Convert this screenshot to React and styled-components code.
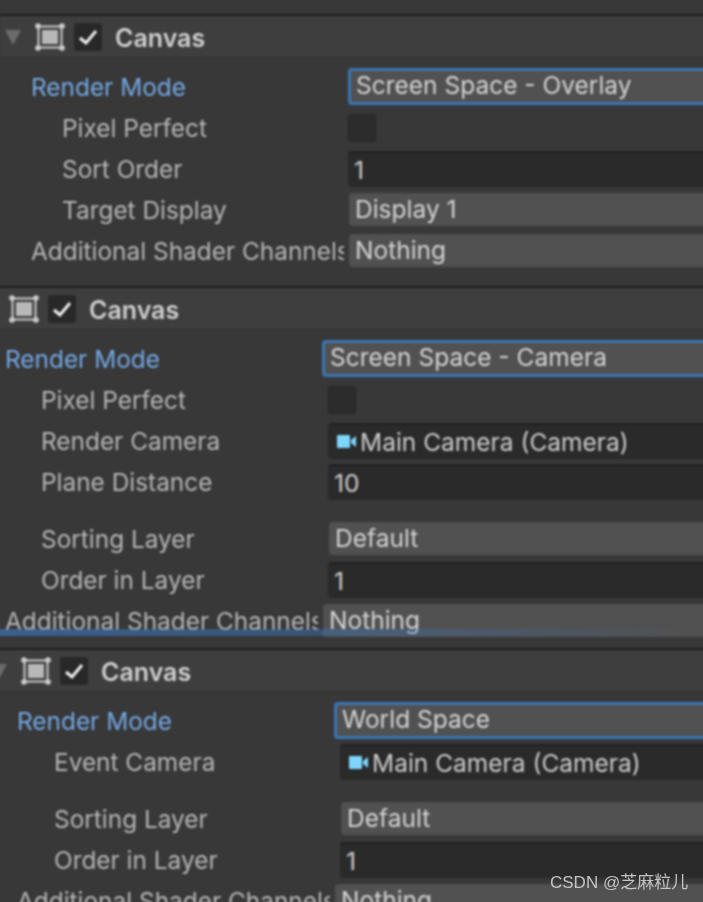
import React from "react";
import styled, { createGlobalStyle } from "styled-components";

const Global = createGlobalStyle`
  html, body { margin: 0; padding: 0; background: #383838; }
  body { width: 703px; height: 902px; overflow: hidden; font-family: Inter, "Noto Sans CJK SC", sans-serif; }
`;

const Page = styled.div`
  position: relative;
  width: 703px;
  height: 902px;
  overflow: hidden;
  background: #383838;
`;
const Blurred = styled.div`
  filter: blur(0.8px);
  padding-top: 14px;
`;
const Panel = styled.section`
  width: 800px;
  margin-left: ${(p) => p.$shift}px;
  padding-bottom: ${(p) => p.$bottom}px;
  border-top: 2px solid #1f1f1f;
`;
const Header = styled.header`
  display: flex;
  align-items: center;
  height: 42px;
  padding: 1px 0 0 5px;
  box-sizing: border-box;
  background: #3e3e3e;
  border-bottom: 1px solid #303030;
  margin-bottom: 8px;
`;
const Arrow = styled.span`
  width: 0;
  height: 0;
  border-left: 8px solid transparent;
  border-right: 8px solid transparent;
  border-top: 15px solid #6b6b6b;
  margin-right: 14px;
`;
const CheckBox = styled.span`
  display: flex;
  align-items: center;
  justify-content: center;
  width: 28px;
  height: 28px;
  margin: 0 13px 0 9px;
  background: #282828;
  border-radius: 3px;
`;
const Title = styled.span`
  padding-top: 2px;
  font-size: 25px;
  font-weight: 600;
  color: #cfcfcf;
`;
const Row = styled.div`
  position: relative;
  display: flex;
  align-items: center;
  height: 41px;
`;
const Label = styled.span`
  flex: none;
  box-sizing: border-box;
  width: ${(p) => (p.$clipped ? 344 : 348)}px;
  padding-left: ${(p) => p.$indent}px;
  padding-top: 1px;
  font-size: 24.4px;
  white-space: nowrap;
  overflow: hidden;
  color: ${(p) => (p.$active ? "#74a8e4" : "#b6b6b6")};
`;
const Spacer = styled.div`
  height: 16px;
`;
const Dropdown = styled.div`
  flex: 1;
  box-sizing: border-box;
  height: ${(p) => (p.$focus ? 37 : 33)}px;
  line-height: ${(p) => (p.$focus ? 29 : 32)}px;
  font-size: 24.5px;
  color: #d4d4d4;
  background: #515151;
  border-radius: 4px;
  border: ${(p) => (p.$focus ? "3px solid #3a76b4" : "none")};
  padding-left: ${(p) => (p.$focus ? 5 : 6)}px;
`;
const Field = styled.div`
  flex: 1;
  display: flex;
  align-items: center;
  gap: 4px;
  box-sizing: border-box;
  height: 36px;
  padding-left: 6px;
  font-size: 24.5px;
  color: #cccccc;
  background: #2a2a2a;
  border-top: 2px solid #212121;
  border-radius: 4px;
`;
const Toggle = styled.div`
  width: 28px;
  height: 28px;
  background: #2c2c2c;
  border: 1px solid #262626;
  box-sizing: border-box;
  border-radius: 3px;
`;
const Glow = styled.div`
  position: absolute;
  left: 0;
  right: 0;
  bottom: 5px;
  height: 7px;
  background: linear-gradient(90deg, rgba(60, 115, 180, 0.7), rgba(60, 115, 180, 0.5) 40%, rgba(60, 115, 180, 0.2) 70%, transparent 90%);
`;
const Watermark = styled.div`
  position: absolute;
  left: 550px;
  top: 871px;
  font-family: "Liberation Sans", "Noto Sans CJK SC", sans-serif;
  font-size: 17px;
  line-height: 24px;
  color: #c4c4c4;
  white-space: nowrap;
`;
const ControlSlot = styled.div`
  flex: 1;
  display: flex;
  margin-left: ${(p) => p.$inset}px;
`;
const CameraSvg = styled.svg`
  margin-left: 3px;
`;

const CanvasIcon = () => (
  <svg width="30" height="28" viewBox="0 0 30 28" fill="none">
    <rect x="3.5" y="3.5" width="23" height="21" stroke="#cdcdcd" strokeWidth="2" />
    <rect x="7" y="7" width="16" height="14" fill="#b8b8b8" />
    {[[3, 3], [27, 3], [3, 25], [27, 25]].map(([x, y]) => (
      <circle key={x + "-" + y} cx={x} cy={y} r="2.8" fill="#cdcdcd" />
    ))}
  </svg>
);
const CheckIcon = () => (
  <svg width="20" height="18" viewBox="0 0 20 18" fill="none">
    <path d="M2 10 L8 15 L18 3" stroke="#f0f0f0" strokeWidth="3" />
  </svg>
);
const CameraIcon = () => (
  <CameraSvg width="19" height="15" viewBox="0 0 19 15">
    <rect x="0" y="1" width="13" height="13" rx="1" fill="#7fd6fb" />
    <path d="M14 6 L19 2 V13 L14 9 Z" fill="#7fd6fb" />
  </CameraSvg>
);

const Control = ({ row }) => {
  if (row.kind === "toggle") return <Toggle />;
  if (row.kind === "field")
    return (
      <Field>
        {row.camera && <CameraIcon />}
        {row.value}
      </Field>
    );
  return <Dropdown $focus={row.kind === "focus"}>{row.value}</Dropdown>;
};

const slotInset = (row, inset) => {
  if (row.kind === "focus") return 0;
  if (row.clipped) return 5;
  return row.kind === "drop" ? inset + 1 : inset;
};

const CanvasPanel = ({ shift, bottom, indent, inset, rows }) => (
  <Panel $shift={shift} $bottom={bottom}>
    <Header>
      <Arrow />
      <CanvasIcon />
      <CheckBox>
        <CheckIcon />
      </CheckBox>
      <Title>Canvas</Title>
    </Header>
    {rows.map((row, i) =>
      row.spacer ? (
        <Spacer key={i} />
      ) : (
        <Row key={i}>
          <Label $clipped={row.clipped} $indent={row.top ? 31 : indent} $active={row.kind === "focus"}>
            {row.label}
          </Label>
          <ControlSlot $inset={slotInset(row, inset)}>
            <Control row={row} />
          </ControlSlot>
          {row.glow && <Glow />}
        </Row>
      )
    )}
  </Panel>
);

const shader = { label: "Additional Shader Channels", kind: "drop", value: "Nothing", top: true, clipped: true };
const panel1 = [
  { label: "Render Mode", kind: "focus", value: "Screen Space - Overlay", top: true },
  { label: "Pixel Perfect", kind: "toggle" },
  { label: "Sort Order", kind: "field", value: "1" },
  { label: "Target Display", kind: "drop", value: "Display 1" },
  shader,
];
const panel2 = [
  { label: "Render Mode", kind: "focus", value: "Screen Space - Camera", top: true },
  { label: "Pixel Perfect", kind: "toggle" },
  { label: "Render Camera", kind: "field", value: "Main Camera (Camera)", camera: true },
  { label: "Plane Distance", kind: "field", value: "10" },
  { spacer: true },
  { label: "Sorting Layer", kind: "drop", value: "Default" },
  { label: "Order in Layer", kind: "field", value: "1" },
  { ...shader, glow: true },
];
const panel3 = [
  { label: "Render Mode", kind: "focus", value: "World Space", top: true },
  { label: "Event Camera", kind: "field", value: "Main Camera (Camera)", camera: true },
  { spacer: true },
  { label: "Sorting Layer", kind: "drop", value: "Default" },
  { label: "Order in Layer", kind: "field", value: "1" },
  shader,
];

export default function App() {
  return (
    <Page>
      <Global />
      <Blurred>
        <CanvasPanel shift={0} bottom={15} indent={62} inset={0} rows={panel1} />
        <CanvasPanel shift={-26} bottom={7} indent={67} inset={6} rows={panel2} />
        <CanvasPanel shift={-14} bottom={0} indent={68} inset={6} rows={panel3} />
      </Blurred>
      <Watermark>CSDN @芝麻粒儿</Watermark>
    </Page>
  );
}
